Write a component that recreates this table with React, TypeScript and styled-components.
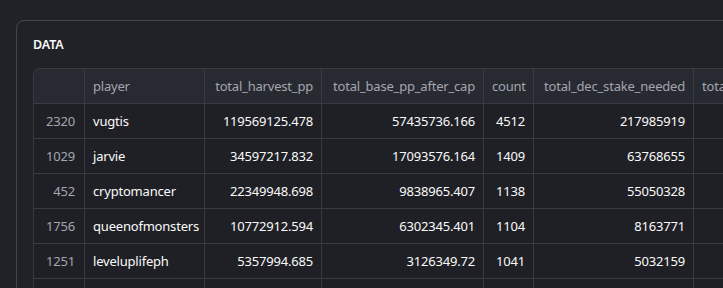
import React from "react";
import styled, { createGlobalStyle } from "styled-components";

const GlobalStyle = createGlobalStyle`
  html, body {
    margin: 0;
    padding: 0;
    background: #212227;
    overflow: hidden;
  }
  body {
    font-family: "Noto Sans", "Open Sans", sans-serif;
  }
`;

type Align = "left" | "right";
type Col = { key: string; label: string; width: number; align: Align; headAlign?: Align };

const COLUMNS: Col[] = [
  { key: "player", label: "player", width: 120, align: "left" },
  { key: "harvest", label: "total_harvest_pp", width: 117, align: "right" },
  { key: "base", label: "total_base_pp_after_cap", width: 162, align: "right" },
  { key: "count", label: "count", width: 50, align: "right" },
  { key: "dec", label: "total_dec_stake_needed", width: 160, align: "right" },
  { key: "more", label: "total_dec_stake_available", width: 180, align: "right", headAlign: "left" },
];

const ROWS = [
  { idx: 2320, player: "vugtis", harvest: "119569125.478", base: "57435736.166", count: "4512", dec: "217985919", more: "" },
  { idx: 1029, player: "jarvie", harvest: "34597217.832", base: "17093576.164", count: "1409", dec: "63768655", more: "" },
  { idx: 452, player: "cryptomancer", harvest: "22349948.698", base: "9838965.407", count: "1138", dec: "55050328", more: "" },
  { idx: 1756, player: "queenofmonsters", harvest: "10772912.594", base: "6302345.401", count: "1104", dec: "8163771", more: "" },
  { idx: 1251, player: "leveluplifeph", harvest: "5357994.685", base: "3126349.72", count: "1041", dec: "5032159", more: "" },
  { idx: 88, player: "", harvest: "", base: "", count: "", dec: "", more: "" },
];

export default function App() {
  return (
    <Page>
      <GlobalStyle />
      <Card>
        <Title>DATA</Title>
        <Grid>
          <colgroup>
            <col style={{ width: 51 }} />
            {COLUMNS.map((c) => (
              <col key={c.key} style={{ width: c.width }} />
            ))}
          </colgroup>
          <thead>
            <tr>
              <HeadCell $align="right"></HeadCell>
              {COLUMNS.map((c) => (
                <HeadCell key={c.key} $align={c.headAlign ?? c.align}>
                  {c.label}
                </HeadCell>
              ))}
            </tr>
          </thead>
          <tbody>
            {ROWS.map((r) => (
              <tr key={r.idx}>
                <IndexCell>{r.player ? r.idx : ""}</IndexCell>
                {COLUMNS.map((c) => (
                  <Cell key={c.key} $align={c.align}>
                    {(r as any)[c.key]}
                  </Cell>
                ))}
              </tr>
            ))}
          </tbody>
        </Grid>
      </Card>
    </Page>
  );
}

const Page = styled.div`
  padding: 20px 0 0 16px;
  width: 1000px;
  height: 288px;
  box-sizing: border-box;
`;

const Card = styled.div`
  border: 1px solid #44454c;
  border-radius: 8px;
  padding: 16px 16px 16px 16px;
  height: 400px;
`;

const Title = styled.div`
  font-size: 12.5px;
  font-weight: 600;
  color: #fafafa;
  line-height: 16px;
  margin-bottom: 15px;
  letter-spacing: -0.1px;
`;

const Grid = styled.table`
  border-collapse: separate;
  border-spacing: 0;
  table-layout: fixed;
  width: 840px;
  border: 1px solid #3a3b42;
  border-right: none;
  border-radius: 7px 0 0 0;
  overflow: hidden;
  font-size: 13px;
  letter-spacing: -0.2px;
`;

const HeadCell = styled.th<{ $align: Align }>`
  height: 35px;
  padding: 0 8px;
  background: #282a31;
  color: #a3a6b0;
  font-weight: 400;
  text-align: ${(p) => p.$align};
  border-right: 1px solid #3a3b42;
  border-bottom: 1px solid #3a3b42;
  white-space: nowrap;
  overflow: hidden;
  box-sizing: border-box;
`;

const Cell = styled.td<{ $align: Align }>`
  height: 35px;
  padding: 0 8px;
  background: #1f2025;
  color: #fafafa;
  text-align: ${(p) => p.$align};
  border-right: 1px solid #3a3b42;
  border-bottom: 1px solid #3a3b42;
  white-space: nowrap;
  overflow: hidden;
  box-sizing: border-box;
`;

const IndexCell = styled(Cell).attrs({ $align: "right" as const })`
  color: #a3a6b0;
  padding-right: 9px;
`;
